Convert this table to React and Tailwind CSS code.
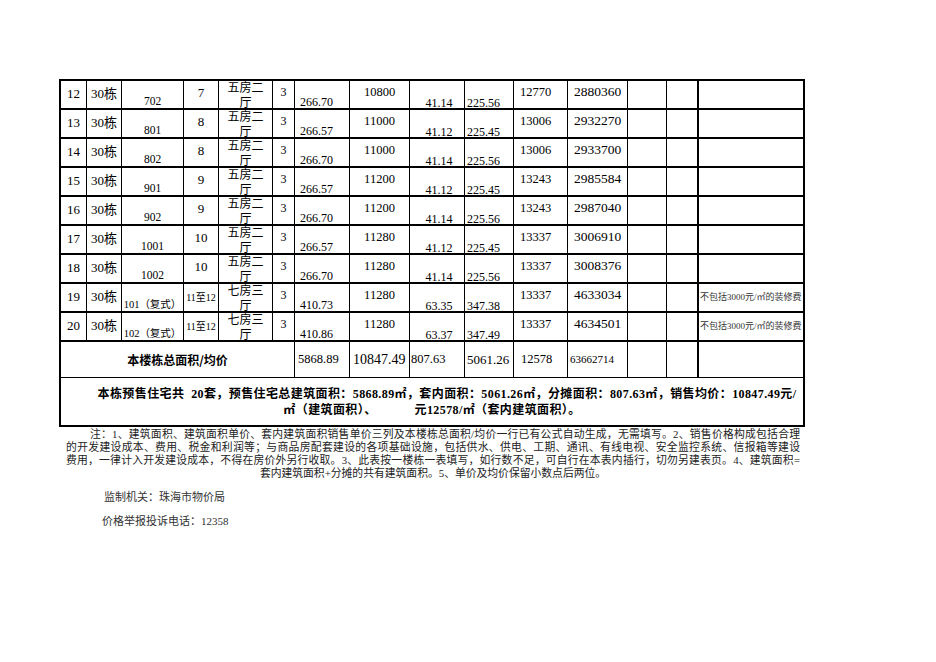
import React from 'react';

const cols =
  'grid grid-cols-[26px_35px_62px_35px_54px_22px_55px_60px_55px_49px_54px_60px_39px_32px_106px]';

const rows = [
  ['12', '702', '7', '五房二', '266.70', '10800', '41.14', '225.56', '12770', '2880360', ''],
  ['13', '801', '8', '五房二', '266.57', '11000', '41.12', '225.45', '13006', '2932270', ''],
  ['14', '802', '8', '五房二', '266.70', '11000', '41.14', '225.56', '13006', '2933700', ''],
  ['15', '901', '9', '五房二', '266.57', '11200', '41.12', '225.45', '13243', '2985584', ''],
  ['16', '902', '9', '五房二', '266.70', '11200', '41.14', '225.56', '13243', '2987040', ''],
  ['17', '1001', '10', '五房二', '266.57', '11280', '41.12', '225.45', '13337', '3006910', ''],
  ['18', '1002', '10', '五房二', '266.70', '11280', '41.14', '225.56', '13337', '3008376', ''],
  ['19', '101（复式）', '11至12', '七房三', '410.73', '11280', '63.35', '347.38', '13337', '4633034', '不包括3000元/㎡的装修费'],
  ['20', '102（复式）', '11至12', '七房三', '410.86', '11280', '63.37', '347.49', '13337', '4634501', '不包括3000元/㎡的装修费'],
];

const cell = 'border-r border-black overflow-hidden flex';
const open = 'border-r border-black flex';

function DataRow({ r }) {
  const duplex = r[1].includes('复式');
  return (
    <div className={`${cols} h-[29px] border-b-2 border-black`}>
      <div className={`${cell} justify-center items-start pt-[5px] text-[13px] leading-[15px]`}>{r[0]}</div>
      <div className={`${cell} justify-center items-start pt-[5px] text-[13px] leading-[15px]`}>30栋</div>
      <div
        className={`${cell} justify-center items-end whitespace-nowrap leading-[13px] ${
          duplex ? 'text-[10.5px]' : 'text-[11.5px]'
        }`}
      >
        {r[1]}
      </div>
      {duplex ? (
        <div className={`${cell} justify-center items-center whitespace-nowrap text-[10px] leading-[12px]`}>{r[2]}</div>
      ) : (
        <div className={`${cell} justify-center items-start pt-[4px] text-[13px] leading-[15px]`}>{r[2]}</div>
      )}
      <div className={`${cell} justify-center items-center pt-[2px] text-center text-[12px] leading-[15px]`}>
        <div>
          {r[3]}
          <br />厅
        </div>
      </div>
      <div className={`${cell} justify-center items-start pt-[4px] text-[12px] leading-[15px]`}>3</div>
      <div className={`${cell} justify-start items-end pl-[5px] text-[12px] leading-[12px]`}>{r[4]}</div>
      <div className={`${cell} justify-center items-start pt-[4px] text-[12.5px] leading-[15px]`}>{r[5]}</div>
      <div className={`${open} justify-center items-end pl-[4px] text-[12px] leading-[9px]`}>{r[6]}</div>
      <div className={`${open} justify-start items-end pl-[2px] text-[12px] leading-[9px]`}>{r[7]}</div>
      <div className={`${cell} justify-start items-start pl-[6px] pt-[4px] text-[12.5px] leading-[15px]`}>{r[8]}</div>
      <div className={`${cell} justify-center items-start pt-[3px] text-[13.5px] leading-[15px]`}>{r[9]}</div>
      <div className={cell}></div>
      <div className="border-r-2 border-black"></div>
      <div className="border-r-2 border-black overflow-hidden flex items-center pl-[1px] whitespace-nowrap text-[9px] text-[#333]">
        {r[10]}
      </div>
    </div>
  );
}

export default function App() {
  return (
    <div className="w-[936px] h-[662px] bg-white text-black font-['Liberation_Serif','Noto_Sans_CJK_SC',serif]">
      <div className="pt-[79px] pl-[59px]">
        {/* 表格 */}
        <div className="w-[746px] border-l-2 border-t-2 border-black">
          {rows.map((r) => (
            <DataRow key={r[0]} r={r} />
          ))}

          {/* 合计行 */}
          <div className={`${cols} h-[36px] border-b border-black`}>
            <div className="col-span-6 border-r border-black flex items-center justify-center font-bold text-[12px] font-['Noto_Sans_CJK_SC','Liberation_Serif',sans-serif]">
              本楼栋总面积/均价
            </div>
            <div className={`${cell} items-center pl-[3px] text-[12.5px]`}>5868.89</div>
            <div className={`${cell} items-center pl-[3px] text-[14px]`}>10847.49</div>
            <div className={`${cell} items-center pl-[1px] text-[12.5px]`}>807.63</div>
            <div className={`${cell} items-center pl-[2px] text-[13px]`}>5061.26</div>
            <div className={`${cell} items-center pl-[7px] text-[12.5px]`}>12578</div>
            <div className={`${cell} items-center pl-[2px] text-[11px]`}>63662714</div>
            <div className={cell}></div>
            <div className="border-r-2 border-black"></div>
            <div className="border-r-2 border-black"></div>
          </div>

          {/* 汇总说明 */}
          <div className="h-[49px] border-r-2 border-b-2 border-black flex flex-col justify-center items-center font-bold text-[12px] leading-[16px] whitespace-nowrap tracking-[0.4px]">
            <div className="pl-[30px]">
              本栋预售住宅共&nbsp;&nbsp;20套，预售住宅总建筑面积：5868.89㎡，套内面积：5061.26㎡，分摊面积：807.63㎡，销售均价：10847.49元/
            </div>
            <div>
              ㎡（建筑面积）、<span className="inline-block w-[38px]"></span>元12578/㎡（套内建筑面积）。
            </div>
          </div>
        </div>
      </div>

      {/* 注释 */}
      <div className="ml-[66px] w-[734px] mt-[1px] text-[10.8px] leading-[13px] text-[#222] whitespace-nowrap">
        <div className="pl-[24px] text-justify [text-align-last:justify]">
          注：1、建筑面积、建筑面积单价、套内建筑面积销售单价三列及本楼栋总面积/均价一行已有公式自动生成，无需填写。2、销售价格构成包括合理
        </div>
        <div className="text-justify [text-align-last:justify]">
          的开发建设成本、费用、税金和利润等；与商品房配套建设的各项基础设施，包括供水、供电、工期、通讯、有线电视、安全监控系统、信报箱等建设
        </div>
        <div className="text-justify [text-align-last:justify]">
          费用，一律计入开发建设成本，不得在房价外另行收取。3、此表按一楼栋一表填写，如行数不足，可自行在本表内插行，切勿另建表页。4、建筑面积=
        </div>
        <div className="text-center">套内建筑面积+分摊的共有建筑面积。5、单价及均价保留小数点后两位。</div>
      </div>

      {/* 监制 */}
      <div className="mt-[10px] text-[11px] leading-[14px] text-[#333]">
        <div className="pl-[104px]">监制机关：珠海市物价局</div>
        <div className="pl-[102px] mt-[10px]">价格举报投诉电话：12358</div>
      </div>
    </div>
  );
}
